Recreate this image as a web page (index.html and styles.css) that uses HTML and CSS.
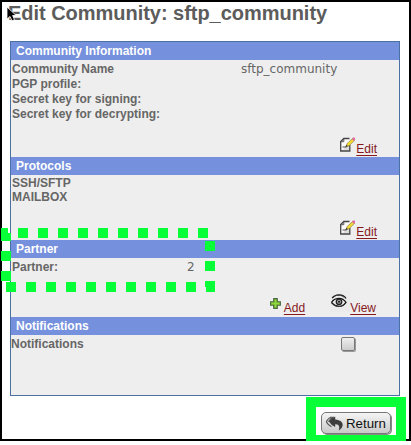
FILE: index.html
```html
<!DOCTYPE html>
<html lang="en">
<head>
<meta charset="utf-8">
<title>Edit Community</title>
<link rel="stylesheet" href="styles.css">
</head>
<body>
<svg class="symbols" width="0" height="0">
  <symbol id="edit" viewBox="0 0 16 15">
    <path d="M4 1.5H9.5V14H.7V4.8L4 1.5Z" fill="#fafafa"/>
    <path d="M6 8h4v5H3z" fill="#ddd"/>
    <path d="M9.5 1.5H3.8L.7 4.6V14h9.1V8" fill="none" stroke="#444" stroke-width="1.3"/>
    <path d="M3.8 1.5v3.2H.7M2.5 10h4" fill="none" stroke="#555"/>
    <path d="M6 9.7 7.2 6.5l5.5-5 1.8 1.8-5.2 5.2z" fill="#f5dc35" stroke="#77691f" stroke-width=".6"/>
    <path d="m5.5 10 1-2.2 1.4 1.4z" fill="#333"/>
    <path d="m12 2 1-1.5h1.7l.5 1.8-1.3 1.6z" fill="#e066a0"/>
  </symbol>
</svg>
<main class="window">
  <h1 class="title">Edit Community: sftp_community</h1>
  <div class="panel">
    <section class="section info">
      <h2 class="heading">Community Information</h2>
      <dl class="fields">
        <dt>Community Name</dt><dd>sftp_community</dd>
        <dt>PGP profile:</dt><dd></dd>
        <dt>Secret key for signing:</dt><dd></dd>
        <dt>Secret key for decrypting:</dt><dd></dd>
      </dl>
      <div class="actions"><svg class="edit-icon"><use href="#edit"/></svg><a href="#">Edit</a></div>
    </section>
    <section class="section protocols">
      <h2 class="heading">Protocols</h2>
      <ul class="list"><li>SSH/SFTP</li><li>MAILBOX</li></ul>
      <div class="actions"><svg class="edit-icon"><use href="#edit"/></svg><a href="#">Edit</a></div>
    </section>
    <section class="section partner">
      <h2 class="heading">Partner</h2>
      <div class="partner-row"><span>Partner:</span><span class="count">2</span></div>
      <div class="actions partner-actions">
        <svg class="add-icon" viewBox="0 0 11 11"><path d="M3.7.6h3.6v3.1h3.1v3.6H7.3v3.1H3.7V7.3H.6V3.7h3.1z" fill="#80c832" stroke="#4e6845" stroke-width="1.1"/><path d="M5.5 2v7M2 5.5h7" stroke="#91d93f"/></svg>
        <a class="add" href="#">Add</a>
        <svg class="view-icon" viewBox="0 0 20 22"><path d="M0 0h20v22H0z" fill="#ebebeb"/><path d="M2.2 8.2C5 4 13 3.5 16 8.5M1.5 12.5c3-5 10.5-6 14.5-.2-3.5 5.3-10 5.3-14.5.2" fill="none" stroke="#111" stroke-width="1.3"/><circle cx="9" cy="11.8" r="2.7" fill="#aaa" stroke="#222" stroke-width="1.4"/><circle cx="9" cy="11.8" r="1" fill="#111"/><path d="m3 7.5 3-2h5l3 1.8M3 14.5c4 3 8 2.7 11-.3" fill="none" stroke="#444" stroke-width=".8"/></svg>
        <a href="#">View</a>
      </div>
    </section>
    <section class="section notifications">
      <h2 class="heading">Notifications</h2>
      <div class="notification-row"><span>Notifications</span><span class="checkbox"></span></div>
    </section>
  </div>
  <div class="return-frame">
    <button class="return"><svg class="return-icon" viewBox="0 0 18 15"><path d="M5.5.8Q2 2.3.3 5.7 2 9 5.5 10.7M7.6.9Q4 2.5 2.4 5.7" fill="none" stroke="#555" stroke-width="1.2"/><path d="M9.2.5Q5.5 2 3 5.7 5.5 9.5 9.2 11V8.3c3.5-.2 5 2 3.5 6.2 5.5-2.8 6.2-10.3-3.5-11z" fill="#3c3c3c"/></svg>Return</button>
  </div>
</main>
<svg class="highlight" width="411" height="445">
  <g fill="none" stroke="#06ff37" stroke-width="10">
    <path d="M18 233H208" stroke-dasharray="10"/>
    <path d="M6 287H196" stroke-dasharray="10"/>
    <path d="M6 251V281" stroke-dasharray="10"/>
    <path d="M210 241V271" stroke-dasharray="10"/>
  </g>
  <path d="M1 228h7v5h3v8H1zM205 281h10v11h-9v-5h-1z" fill="#06ff37"/>
</svg>
<svg class="cursor" viewBox="0 0 11 16"><path d="M1 1v12l3-2.6 2 4.4 2.5-1L6.6 9.5h3.6z" fill="#000" stroke="#fff" stroke-width=".8"/></svg>
</body>
</html>
```
FILE: styles.css
```css
* { box-sizing: border-box; }
body { margin: 0; background: #fff; color: #666; font: bold 12px/15px "Liberation Sans", Arial, sans-serif; overflow: hidden; }
h1, h2, dl, dd, ul { margin: 0; padding: 0; }
.symbols { position: absolute; }
.window { width: 411px; height: 441px; border: 2px solid #000; padding: 0 10px 0 8px; }
.title { height: 39px; margin-left: -2px; font-size: 20px; line-height: 22px; letter-spacing: -.03px; color: #5c5c5c; white-space: nowrap; }
.panel { width: 390px; height: 355px; border: 1px solid #4b70a3; background: #eee; }
.section { display: flex; flex-direction: column; }
.info { height: 115px; }
.protocols { height: 83px; }
.partner { height: 77px; }
.notifications { height: 78px; }
.heading { flex: none; height: 18px; padding-left: 5px; font-size: 12px; line-height: 18px; color: #fff; background: #7590dd; }
.fields { display: grid; grid-template-columns: 229px 1fr; grid-auto-rows: 15px; padding: 2px 0 0 1px; }
.fields dd, .count { font-family: "DejaVu Sans", sans-serif; font-weight: normal; }
.list { list-style: none; padding: 1px 0 0 1px; line-height: 14px; }
.partner-row { display: flex; padding: 2px 0 0 1px; }
.partner-row span:first-child { width: 175px; }
.actions { display: flex; margin-top: auto; padding-right: 22px; justify-content: flex-end; align-items: flex-end; font-weight: normal; line-height: 15px; }
.partner-actions { padding: 0 23px 1px 0; }
.actions a { color: #85191c; text-decoration: underline; text-underline-offset: 2px; }
.edit-icon { width: 16px; height: 15px; margin: 0 0 5px; }
.add-icon { width: 11px; height: 11px; margin: 0 3px 7px 0; }
.add { margin-right: 25px; }
.view-icon { width: 20px; height: 22px; margin-bottom: 4px; }
.notification-row { display: flex; padding-top: 2px; }
.notification-row span:first-child { width: 330px; }
.checkbox { width: 14px; height: 14px; border: 1px solid #777; border-radius: 2px; background: linear-gradient(#eee, #ccc); box-shadow: 1px 1px #999; }
.return-frame { position: relative; width: 100px; height: 48px; margin: 1px 0 0 296px; border: 10px solid #06ff37; background: #fff; padding: 5px; }
.return { display: flex; align-items: center; gap: 2px; width: 70px; height: 22px; padding: 0 0 0 4px; border: 1px solid #777; border-radius: 5px; background: linear-gradient(#f5f5f5, #c9c9c9); box-shadow: 1px 1px #888; color: #111; font: 13.3px "Liberation Sans", Arial, sans-serif; }
.return-icon { flex: none; width: 18px; height: 15px; }
.highlight { position: absolute; left: 0; top: 0; }
.cursor { position: absolute; left: 6px; top: 6px; width: 11px; height: 16px; }
```
